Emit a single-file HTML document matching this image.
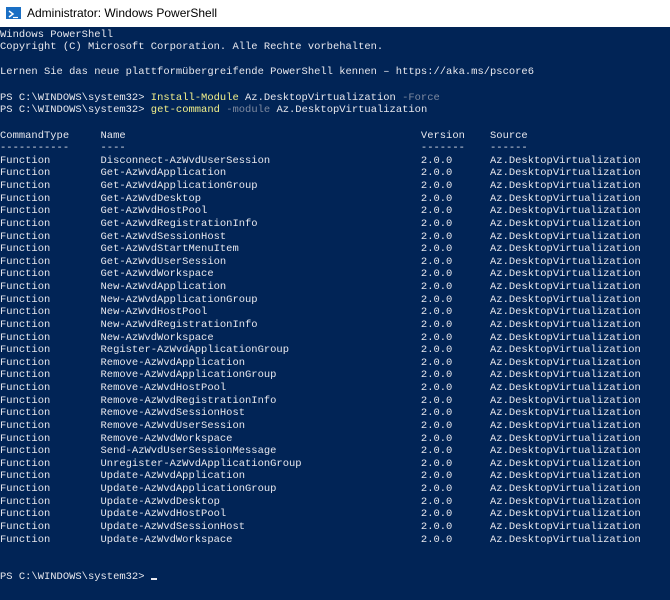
<!DOCTYPE html>
<html><head><meta charset="utf-8"><style>
html,body{margin:0;padding:0;width:670px;height:600px;overflow:hidden;background:#012456;}
#tb{position:absolute;left:0;top:0;width:670px;height:27px;background:#fff;}
#tb .t{position:absolute;left:27px;top:6px;font:12px "Liberation Sans",sans-serif;color:#000;}
#ic{position:absolute;left:6px;top:7px;width:15px;height:12px;background:#1a6fc4;}
pre{position:absolute;left:0;top:28.5px;margin:0;font-family:"Liberation Mono",monospace;font-size:10.47px;line-height:12.63px;color:#e8e8ee;white-space:pre;}
.y{color:#f3f08a}.g{color:#7f8aa0}
.cur{display:inline-block;width:6px;height:2px;background:#e8e8ee;vertical-align:-1px;}
</style></head><body>
<div id="tb"><div id="ic"><svg width="15" height="12"><path d="M3 3 L7 6 L3 9" stroke="#fff" stroke-width="1.5" fill="none"/><path d="M7 9.5 H12" stroke="#fff" stroke-width="1.2"/></svg></div><div class="t">Administrator: Windows PowerShell</div></div>
<pre>Windows PowerShell
Copyright (C) Microsoft Corporation. Alle Rechte vorbehalten.

Lernen Sie das neue plattformübergreifende PowerShell kennen – https://aka.ms/pscore6

PS C:\WINDOWS\system32&gt; <span class="y">Install-Module</span> Az.DesktopVirtualization <span class="g">-Force</span>
PS C:\WINDOWS\system32&gt; <span class="y">get-command</span> <span class="g">-module</span> Az.DesktopVirtualization

CommandType     Name                                               Version    Source
-----------     ----                                               -------    ------
Function        Disconnect-AzWvdUserSession                        2.0.0      Az.DesktopVirtualization
Function        Get-AzWvdApplication                               2.0.0      Az.DesktopVirtualization
Function        Get-AzWvdApplicationGroup                          2.0.0      Az.DesktopVirtualization
Function        Get-AzWvdDesktop                                   2.0.0      Az.DesktopVirtualization
Function        Get-AzWvdHostPool                                  2.0.0      Az.DesktopVirtualization
Function        Get-AzWvdRegistrationInfo                          2.0.0      Az.DesktopVirtualization
Function        Get-AzWvdSessionHost                               2.0.0      Az.DesktopVirtualization
Function        Get-AzWvdStartMenuItem                             2.0.0      Az.DesktopVirtualization
Function        Get-AzWvdUserSession                               2.0.0      Az.DesktopVirtualization
Function        Get-AzWvdWorkspace                                 2.0.0      Az.DesktopVirtualization
Function        New-AzWvdApplication                               2.0.0      Az.DesktopVirtualization
Function        New-AzWvdApplicationGroup                          2.0.0      Az.DesktopVirtualization
Function        New-AzWvdHostPool                                  2.0.0      Az.DesktopVirtualization
Function        New-AzWvdRegistrationInfo                          2.0.0      Az.DesktopVirtualization
Function        New-AzWvdWorkspace                                 2.0.0      Az.DesktopVirtualization
Function        Register-AzWvdApplicationGroup                     2.0.0      Az.DesktopVirtualization
Function        Remove-AzWvdApplication                            2.0.0      Az.DesktopVirtualization
Function        Remove-AzWvdApplicationGroup                       2.0.0      Az.DesktopVirtualization
Function        Remove-AzWvdHostPool                               2.0.0      Az.DesktopVirtualization
Function        Remove-AzWvdRegistrationInfo                       2.0.0      Az.DesktopVirtualization
Function        Remove-AzWvdSessionHost                            2.0.0      Az.DesktopVirtualization
Function        Remove-AzWvdUserSession                            2.0.0      Az.DesktopVirtualization
Function        Remove-AzWvdWorkspace                              2.0.0      Az.DesktopVirtualization
Function        Send-AzWvdUserSessionMessage                       2.0.0      Az.DesktopVirtualization
Function        Unregister-AzWvdApplicationGroup                   2.0.0      Az.DesktopVirtualization
Function        Update-AzWvdApplication                            2.0.0      Az.DesktopVirtualization
Function        Update-AzWvdApplicationGroup                       2.0.0      Az.DesktopVirtualization
Function        Update-AzWvdDesktop                                2.0.0      Az.DesktopVirtualization
Function        Update-AzWvdHostPool                               2.0.0      Az.DesktopVirtualization
Function        Update-AzWvdSessionHost                            2.0.0      Az.DesktopVirtualization
Function        Update-AzWvdWorkspace                              2.0.0      Az.DesktopVirtualization


PS C:\WINDOWS\system32&gt; <span class="cur"></span></pre>
</body></html>
